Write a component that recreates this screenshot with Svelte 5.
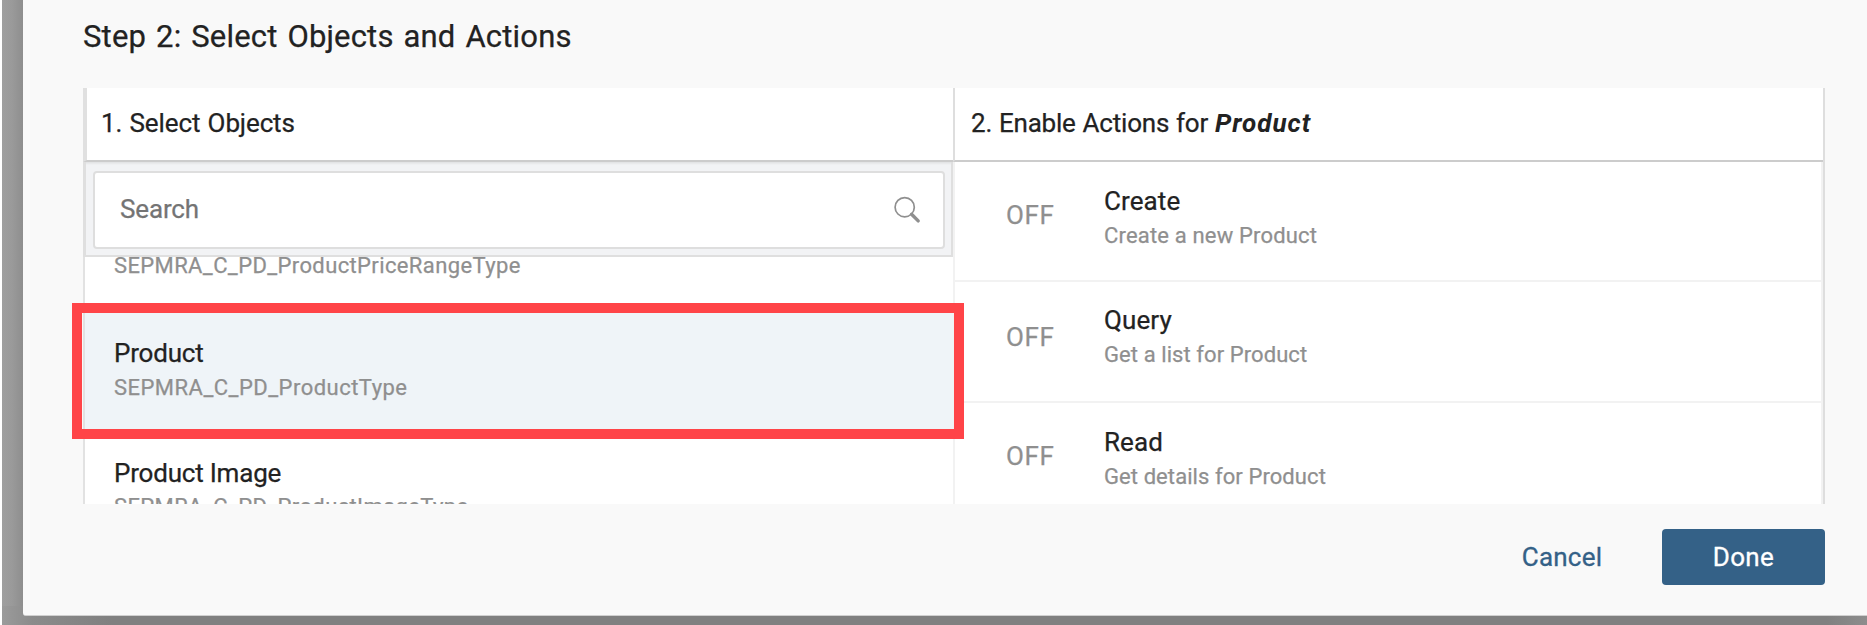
<script>
  let selected = $state('Product');
  let query = $state('');

  const objects = [
    { name: '', type: 'SEPMRA_C_PD_ProductPriceRangeType' },
    { name: 'Product', type: 'SEPMRA_C_PD_ProductType' },
    { name: 'Product Image', type: 'SEPMRA_C_PD_ProductImageType' }
  ];

  const actions = [
    { name: 'Create', text: 'Create a new' },
    { name: 'Query', text: 'Get a list for' },
    { name: 'Read', text: 'Get details for' }
  ];
</script>

<div class="backdrop">
  <section class="dialog">
    <h1>Step 2: Select Objects and Actions</h1>

    <div class="panels">
      <div class="objects">
        <header>1. Select Objects</header>
        <div class="toolbar">
          <label class="search">
            <input type="text" placeholder="Search" bind:value={query} />
            <svg width="30" height="30" viewBox="0 0 30 30" fill="none" stroke="#8f8f8f">
              <circle cx="12.7" cy="12.2" r="9.6" stroke-width="1.7" />
              <path d="M19.6 19.3 26.2 25.9" stroke-width="3.4" stroke-linecap="round" />
            </svg>
          </label>
        </div>
        <div class="list">
          {#each objects as item}
            <div class="object" class:selected={item.name === selected}>
              {#if item.name}
                <div class="name">{item.name}</div>
              {/if}
              <div class="type">{item.type}</div>
            </div>
          {/each}
        </div>
        <div class="marker"></div>
      </div>

      <div class="actions">
        <header>2. Enable Actions for <em>{selected}</em></header>
        <div class="rows">
          {#each actions as action}
            <div class="action">
              <span class="state">OFF</span>
              <div>
                <div class="name">{action.name}</div>
                <div class="text">{action.text} {selected}</div>
              </div>
            </div>
          {/each}
        </div>
      </div>
    </div>

    <footer>
      <button class="cancel">Cancel</button>
      <button class="done">Done</button>
    </footer>
  </section>
</div>

<style>
  :global(body) {
    margin: 0;
    background: #fff;
    overflow: hidden;
  }

  .backdrop {
    box-sizing: border-box;
    width: 1867px;
    height: 625px;
    padding-left: 21px;
    border-left: 2px solid #fff;
    background:
      linear-gradient(90deg, #9f9f9f 0, #9a9a9a 10px, #8e8e8e 21px, transparent 21px) 0 0 / 100% 606px no-repeat,
      linear-gradient(90deg, #9b9b9b 0, #8b8b8b 30px, #808080 110px, #808080 1825px, #8d8d8d 1865px);
    font-family: Roboto, "Liberation Sans", sans-serif;
    color: #222;
    -webkit-text-stroke-width: 0.25px;
    overflow: hidden;
  }

  .dialog {
    box-sizing: border-box;
    height: 616px;
    padding: 0 42px 0 60px;
    border-bottom: 1px solid #d0d0d0;
    border-bottom-left-radius: 3px;
    background: #f9f9f9;
  }

  h1 {
    height: 88px;
    margin: 0;
    font-size: 31px;
    font-weight: 400;
    line-height: 73px;
    letter-spacing: 0.17px;
    word-spacing: 2.1px;
  }

  .panels {
    box-sizing: border-box;
    display: grid;
    grid-template-columns: 870px 872px;
    height: 416px;
    background: #fff;
  }

  header {
    box-sizing: border-box;
    height: 74px;
    border-bottom: 2px solid #ccc;
    font-size: 26px;
    line-height: 70px;
    white-space: nowrap;
  }

  .objects {
    position: relative;
    display: flex;
    flex-direction: column;
    min-width: 0;
    height: 416px;
  }

  .objects header {
    padding-left: 14px;
    border-left: 4px solid #e0e0e0;
    letter-spacing: -0.12px;
    word-spacing: 1px;
  }

  .toolbar {
    box-sizing: border-box;
    flex: none;
    height: 95px;
    padding: 9px 6px 6px 7px;
    border: solid #dfdfdf;
    border-width: 0 2px 2px 3px;
    background: linear-gradient(#e0e1e2, #f2f3f5 3px);
  }

  .search {
    box-sizing: border-box;
    display: flex;
    align-items: center;
    height: 78px;
    padding: 0 21px 0 25px;
    border: 2px solid #dedede;
    border-radius: 4px;
    background: #fff;
  }

  input {
    flex: 1;
    min-width: 0;
    padding: 0 0 2px;
    border: 0;
    outline: 0;
    background: none;
    color: #222;
    font: 26px Roboto, "Liberation Sans", sans-serif;
    letter-spacing: -0.15px;
  }

  input::placeholder {
    color: #747474;
    opacity: 1;
  }

  .list {
    flex: 1;
    min-height: 0;
    overflow: hidden;
    border-left: 2px solid #e2e2e2;
  }

  .object {
    box-sizing: border-box;
    height: 120px;
    padding: 26px 0 0 29px;
    white-space: nowrap;
  }

  .object:first-child {
    height: 53px;
    padding-top: 0;
  }

  .object:first-child .type {
    line-height: 18px;
  }

  .object.selected {
    background: #eff4f8;
  }

  .name {
    height: 34px;
    font-size: 26px;
    line-height: 34px;
  }

  .object .name {
    letter-spacing: -0.2px;
  }

  .type,
  .text {
    height: 34px;
    color: #8f8f8f;
    font-size: 22px;
    line-height: 36px;
    letter-spacing: 0.38px;
  }

  .object:last-child .type {
    line-height: 34px;
  }

  .selected .type {
    letter-spacing: 0.47px;
  }

  .marker {
    position: absolute;
    box-sizing: border-box;
    left: -11px;
    top: 215px;
    width: 892px;
    height: 136px;
    border: 10px solid #ff4448;
    z-index: 1;
  }

  .actions {
    height: 416px;
    overflow: hidden;
    border-right: 2px solid #dedede;
  }

  .actions header {
    padding-left: 16px;
    border-left: 2px solid #dedede;
    letter-spacing: -0.2px;
    word-spacing: 0.6px;
  }

  em {
    font-weight: 700;
    letter-spacing: 1px;
    -webkit-text-stroke-width: 0;
  }

  .rows {
    border-left: 2px solid #f2f2f2;
    border-right: 2px solid #f2f2f2;
  }

  .action {
    box-sizing: border-box;
    display: flex;
    height: 121px;
    padding: 22px 0 0 51px;
    border-bottom: 2px solid #f2f2f2;
    white-space: nowrap;
  }

  .action:nth-child(2) {
    padding-top: 21px;
  }

  .action:first-child {
    height: 120px;
  }

  .action:last-child {
    border-bottom: 0;
  }

  .action .name {
    letter-spacing: 0.1px;
  }

  .action .text {
    letter-spacing: 0.08px;
  }

  .action:first-child .text {
    letter-spacing: 0.17px;
  }

  .state {
    width: 98px;
    padding-top: 14px;
    color: #8f8f8f;
    font-size: 26px;
    line-height: 34px;
    letter-spacing: 0.6px;
  }

  .action:nth-child(2) .state {
    padding-top: 17px;
  }

  footer {
    display: flex;
    justify-content: flex-end;
    gap: 22px;
    padding-top: 25px;
  }

  button {
    height: 56px;
    padding: 0;
    border: 0;
    border-radius: 4px;
    background: none;
    font: 26px/54px Roboto, "Liberation Sans", sans-serif;
    -webkit-text-stroke-width: 0.3px;
  }

  .cancel {
    width: 156px;
    color: #346187;
    letter-spacing: 0.2px;
  }

  .done {
    width: 163px;
    background: #346187;
    color: #fff;
    letter-spacing: 0.4px;
  }
</style>
